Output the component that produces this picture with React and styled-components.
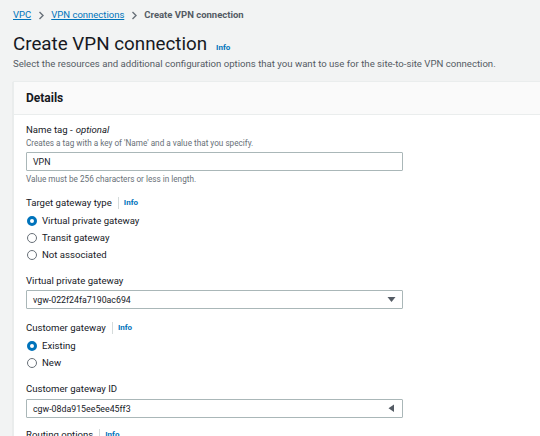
import React from "react";
import styled, { createGlobalStyle } from "styled-components";

const Global = createGlobalStyle`
  html, body { margin: 0; padding: 0; }
  body {
    background: #f2f3f3;
    font-family: Roboto, "Noto Sans", sans-serif;
    color: #16191f;
    overflow: hidden;
    width: 540px;
    height: 436px;
  }
`;

const Page = styled.div`
  padding: 8px 0 0 13px;
`;

const Crumbs = styled.nav`
  display: flex;
  align-items: center;
  height: 14px;
  font-size: 9.5px;
  line-height: 14px;
`;

const CrumbLink = styled.a`
  color: #0073bb;
  text-decoration: underline;
`;

const CrumbSep = styled.span`
  display: inline-flex;
  margin: 0 6px 0 7px;
  color: #687078;
`;

const CrumbCurrent = styled.span`
  color: #545b64;
  font-weight: 700;
`;

const Title = styled.h1`
  margin: 9px 0 0;
  height: 26px;
  font-size: 18.8px;
  line-height: 26px;
  font-weight: 400;
  display: flex;
  align-items: baseline;
  gap: 9px;
`;

const TitleInfo = styled.a`
  font-size: 8px;
  line-height: 10px;
  font-weight: 700;
  color: #0073bb;
`;

const Desc = styled.p`
  margin: 0;
  font-size: 9.6px;
  line-height: 14px;
  color: #545b64;
`;

const Panel = styled.section`
  margin-top: 10px;
  width: 560px;
  background: #fff;
  border: 1px solid #eaeded;
  border-right: none;
  box-shadow: 0 1px 1px rgba(0, 28, 36, 0.2);
`;

const PanelHeader = styled.header`
  height: 32px;
  display: flex;
  align-items: center;
  padding: 0 12px;
  background: #fafafa;
  border-bottom: 1px solid #eaeded;
  font-size: 12px;
  font-weight: 700;
`;

const PanelBody = styled.div`
  padding: 8px 12px 0;
  display: flex;
  flex-direction: column;
`;

const Field = styled.div`
  display: flex;
  flex-direction: column;
  margin-top: ${(p) => p.$gap ?? 11}px;
`;

const Label = styled.div`
  display: flex;
  align-items: center;
  height: 14px;
  font-size: 9.6px;
  line-height: 14px;
  color: #16191f;
  margin-bottom: ${(p) => p.$mb ?? 2}px;
`;

const Optional = styled.i`
  margin-left: 3px;
`;

const InfoSep = styled.span`
  display: inline-block;
  width: 1px;
  height: 12px;
  background: #d5dbdb;
  margin: 0 5px 0 6px;
`;

const InfoLink = styled.a`
  font-size: 8px;
  font-weight: 700;
  color: #0073bb;
`;

const Hint = styled.div`
  font-size: 8.2px;
  line-height: 12px;
  color: #687078;
`;

const Input = styled.div`
  box-sizing: border-box;
  width: 377px;
  height: 19px;
  border: 1px solid #aab7b8;
  border-radius: 1px;
  display: flex;
  align-items: center;
  justify-content: space-between;
  padding: 0 6px 0 6px;
  font-size: 8.8px;
  color: #16191f;
  background: #fff;
  margin: ${(p) => p.$m || "0"};
`;

const RadioRow = styled.label`
  display: flex;
  align-items: center;
  height: 17px;
  font-size: 9.6px;
  gap: 5px;
  padding-left: 1px;
`;

const RadioDot = styled.span`
  box-sizing: border-box;
  width: 10px;
  height: 10px;
  border-radius: 50%;
  border: ${(p) => (p.$on ? "3px solid #0073bb" : "1px solid #687078")};
  background: #fff;
`;

const Radio = ({ on, children }) => (
  <RadioRow>
    <RadioDot $on={on} />
    {children}
  </RadioRow>
);

const Caret = ({ dir }) => (
  <svg width="9" height="9" viewBox="0 0 9 9">
    {dir === "left" ? (
      <path d="M7 0.5 L7 8 L1.5 4.25 Z" fill="#545b64" />
    ) : (
      <path d="M0.5 2 L8.5 2 L4.5 7 Z" fill="#545b64" />
    )}
  </svg>
);

const Sep = () => (
  <CrumbSep>
    <svg width="7" height="9" viewBox="0 0 7 9">
      <path d="M1.5 1 L5 4.5 L1.5 8" fill="none" stroke="#687078" strokeWidth="1.4" />
    </svg>
  </CrumbSep>
);

export default function App() {
  return (
    <Page>
      <Global />
      <Crumbs>
        <CrumbLink>VPC</CrumbLink>
        <Sep />
        <CrumbLink>VPN connections</CrumbLink>
        <Sep />
        <CrumbCurrent>Create VPN connection</CrumbCurrent>
      </Crumbs>
      <Title>
        Create VPN connection <TitleInfo>Info</TitleInfo>
      </Title>
      <Desc>
        Select the resources and additional configuration options that you want to use for the
        site-to-site VPN connection.
      </Desc>
      <Panel>
        <PanelHeader>Details</PanelHeader>
        <PanelBody>
          <Field $gap={0}>
            <Label $mb={0}>
              Name tag -<Optional>optional</Optional>
            </Label>
            <Hint>Creates a tag with a key of 'Name' and a value that you specify.</Hint>
            <Input $m="3px 0 2px">VPN</Input>
            <Hint>Value must be 256 characters or less in length.</Hint>
          </Field>
          <Field>
            <Label>
              Target gateway type
              <InfoSep />
              <InfoLink>Info</InfoLink>
            </Label>
            <Radio on>Virtual private gateway</Radio>
            <Radio>Transit gateway</Radio>
            <Radio>Not associated</Radio>
          </Field>
          <Field>
            <Label>Virtual private gateway</Label>
            <Input>
              vgw-022f24fa7190ac694
              <Caret />
            </Input>
          </Field>
          <Field $gap={12}>
            <Label>
              Customer gateway
              <InfoSep />
              <InfoLink>Info</InfoLink>
            </Label>
            <Radio on>Existing</Radio>
            <Radio>New</Radio>
          </Field>
          <Field>
            <Label $mb={3}>Customer gateway ID</Label>
            <Input>
              cgw-08da915ee5ee45ff3
              <Caret dir="left" />
            </Input>
          </Field>
          <Field $gap={10}>
            <Label>
              Routing options
              <InfoSep />
              <InfoLink>Info</InfoLink>
            </Label>
          </Field>
        </PanelBody>
      </Panel>
    </Page>
  );
}
